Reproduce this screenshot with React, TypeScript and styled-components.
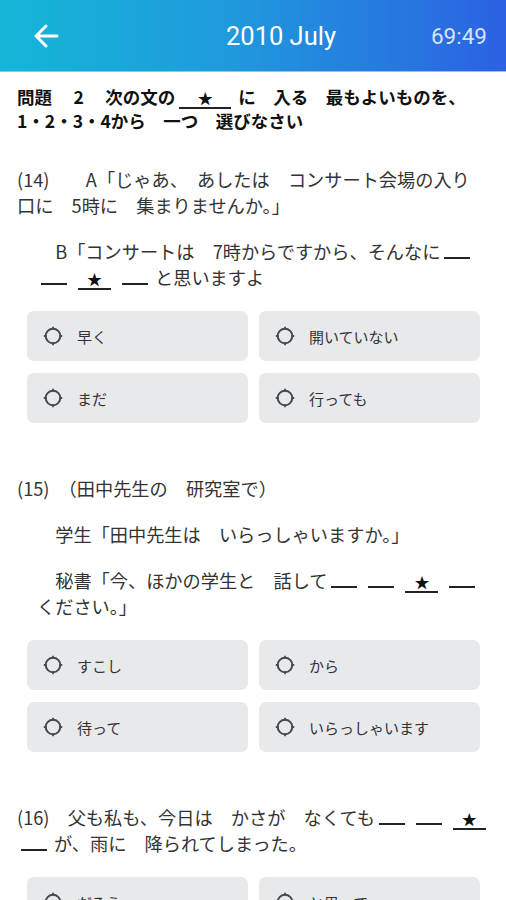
import React from "react";
import styled, { createGlobalStyle } from "styled-components";

const Global = createGlobalStyle`
  html, body { margin: 0; padding: 0; background: #fff; }
  body { font-family: "Noto Sans CJK JP", "Noto Sans", sans-serif; overflow: hidden; }
  * { box-sizing: border-box; }
`;

const SP = "\u3000";

const Header = styled.header`
  height: 72px;
  display: grid;
  grid-template-columns: 90px 1fr 90px;
  align-items: center;
  background: linear-gradient(90deg, #15b6d7 0%, #1f9adc 45%, #2c61e3 100%);
  border-bottom: 1px solid #8fc4ee;
  color: #fff;
`;

const BackButton = styled.button`
  border: 0;
  background: none;
  padding: 0 0 0 32px;
  display: flex;
  align-items: center;
  height: 100%;
  cursor: pointer;
`;

const Title = styled.h1`
  margin: 0;
  text-align: center;
  font-family: Roboto, "Noto Sans", sans-serif;
  font-weight: 400;
  font-size: 25.5px;
  color: #fff;
  padding-left: 56px;
`;

const Timer = styled.div`
  font-family: Roboto, "Noto Sans", sans-serif;
  font-size: 22.5px;
  color: rgba(255, 255, 255, 0.82);
  text-align: right;
  padding-right: 19px;
`;

const Content = styled.main`
  padding: 13px 17px 0;
`;

const Instruction = styled.p`
  margin: 0 0 33px;
  font-weight: 700;
  font-size: 17.5px;
  line-height: 24px;
  color: #111;
  white-space: nowrap;
`;

const Question = styled.section`
  margin-bottom: 52px;
`;

const Para = styled.p<{ $indent?: boolean }>`
  margin: 0 0 20px;
  padding-left: ${(p) => (p.$indent ? "20px" : "0")};
  font-size: 18.2px;
  line-height: 26px;
  color: #333;
  white-space: nowrap;
`;

const Blank = styled.span<{ $w?: number }>`
  display: inline-block;
  width: ${(p) => p.$w ?? 26}px;
  margin: 0 7px 0 4px;
  border-bottom: 2px solid #222;
  line-height: 18px;
  font-size: 15px;
  text-align: center;
  color: #111;
`;

const Options = styled.div`
  display: grid;
  grid-template-columns: 1fr 1fr;
  column-gap: 11px;
  row-gap: 12px;
  padding: 1px 9px 0 10px;
`;

const Option = styled.button`
  height: 50px;
  display: flex;
  align-items: center;
  gap: 14px;
  padding: 0 0 0 16px;
  border: 0;
  border-radius: 7px;
  background: #e8e9eb;
  font-family: "Noto Sans CJK JP", sans-serif;
  font-size: 15px;
  color: #333;
  text-align: left;
  cursor: pointer;
`;

const Radio = () => (
  <svg width="20" height="20" viewBox="0 0 20 20" fill="none">
    <circle cx="10" cy="10" r="7.3" stroke="#4a4a4a" strokeWidth="2" />
    <path d="M10 0.8v2.8M10 16.4v2.8M0.8 10h2.8M16.4 10h2.8" stroke="#4a4a4a" strokeWidth="1.8" />
  </svg>
);

const BackArrow = () => (
  <svg width="28" height="28" viewBox="0 0 28 28" fill="none">
    <path d="M25 14H4M14 4L4 14l10 10" stroke="#fff" strokeWidth="3" strokeLinecap="round" strokeLinejoin="round" />
  </svg>
);

const Star = () => <Blank $w={33}>★</Blank>;

const OptionGrid = ({ items }: { items: string[] }) => (
  <Options>
    {items.map((t) => (
      <Option key={t}>
        <Radio />
        <span>{t}</span>
      </Option>
    ))}
  </Options>
);

export default function App() {
  return (
    <>
      <Global />
      <Header>
        <BackButton aria-label="back">
          <BackArrow />
        </BackButton>
        <Title>2010 July</Title>
        <Timer>69:49</Timer>
      </Header>
      <Content>
        <Instruction>
          {`問題${SP} 2${SP} 次の文の`}
          <Blank $w={52}>★</Blank>
          {`に${SP}入る${SP}最もよいものを、`}
          <br />
          {`1・2・3・4から${SP}一つ${SP}選びなさい`}
        </Instruction>

        <Question>
          <Para>
            {`(14)${SP}${SP}A「じゃあ、${SP}あしたは${SP}コンサート会場の入り`}
            <br />
            {`口に${SP}5時に${SP}集まりませんか。」`}
          </Para>
          <Para $indent>
            {`${SP}B「コンサートは${SP}7時からですから、そんなに`}
            <Blank />
            <br />
            <Blank />
            <Star />
            <Blank />
            {"と思いますよ"}
          </Para>
          <OptionGrid items={["早く", "開いていない", "まだ", "行っても"]} />
        </Question>

        <Question>
          <Para>{`(15)${SP}（田中先生の${SP}研究室で）`}</Para>
          <Para $indent>{`${SP}学生「田中先生は${SP}いらっしゃいますか。」`}</Para>
          <Para $indent>
            {`${SP}秘書「今、ほかの学生と${SP}話して`}
            <Blank />
            <Blank />
            <Star />
            <Blank />
            <br />
            {"ください。」"}
          </Para>
          <OptionGrid items={["すこし", "から", "待って", "いらっしゃいます"]} />
        </Question>

        <Question>
          <Para>
            {`(16)${SP}父も私も、今日は${SP}かさが${SP}なくても`}
            <Blank />
            <Blank />
            <Star />
            <br />
            <Blank />
            {`が、雨に${SP}降られてしまった。`}
          </Para>
          <OptionGrid items={["だろう", "と思って", "いい", "出かけた"]} />
        </Question>
      </Content>
    </>
  );
}
